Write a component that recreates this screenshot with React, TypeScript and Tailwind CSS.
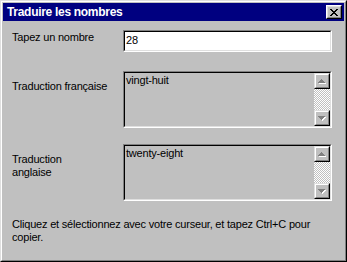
import React from 'react';

const CloseButton: React.FC = () => (
  <div className="w-[16px] h-[14px] border border-t-white border-l-white border-r-black border-b-black">
    <div className="w-full h-full bg-[#c0c0c0] border border-t-[#dfdfdf] border-l-[#dfdfdf] border-r-[#808080] border-b-[#808080] flex items-center justify-center">
      <svg width="8" height="7" viewBox="0 0 8 7" shapeRendering="crispEdges">
        <rect x="0" y="0" width="2" height="1" fill="#000" />
        <rect x="6" y="0" width="2" height="1" fill="#000" />
        <rect x="1" y="1" width="2" height="1" fill="#000" />
        <rect x="5" y="1" width="2" height="1" fill="#000" />
        <rect x="2" y="2" width="4" height="1" fill="#000" />
        <rect x="3" y="3" width="2" height="1" fill="#000" />
        <rect x="2" y="4" width="4" height="1" fill="#000" />
        <rect x="1" y="5" width="2" height="1" fill="#000" />
        <rect x="5" y="5" width="2" height="1" fill="#000" />
        <rect x="0" y="6" width="2" height="1" fill="#000" />
        <rect x="6" y="6" width="2" height="1" fill="#000" />
      </svg>
    </div>
  </div>
);

// disabled scroll arrow: grey glyph with a white shadow
const Arrow: React.FC<{ down?: boolean }> = ({ down }) => {
  const rows = down
    ? [[0, 0, 7], [1, 1, 5], [2, 2, 3], [3, 3, 1]]
    : [[3, 0, 1], [2, 1, 3], [1, 2, 5], [0, 3, 7]];
  return (
    <svg width="8" height="5" viewBox="0 0 8 5" shapeRendering="crispEdges">
      {rows.map(([x, y, w]) => (
        <rect key={`s${y}`} x={x + 1} y={y + 1} width={w} height="1" fill="#fff" />
      ))}
      {rows.map(([x, y, w]) => (
        <rect key={`g${y}`} x={x} y={y} width={w} height="1" fill="#808080" />
      ))}
    </svg>
  );
};

const ScrollButton: React.FC<{ down?: boolean }> = ({ down }) => (
  <div className="w-[16px] h-[16px] border border-t-[#dfdfdf] border-l-[#dfdfdf] border-r-black border-b-black">
    <div className="w-full h-full bg-[#c0c0c0] border border-t-white border-l-white border-r-[#808080] border-b-[#808080] flex items-center justify-center">
      <Arrow down={down} />
    </div>
  </div>
);

const Sunken: React.FC<{ className: string; children: React.ReactNode }> = ({ className, children }) => (
  <div className={`border border-t-[#808080] border-l-[#808080] border-r-white border-b-white ${className}`}>
    <div className="w-full h-full border border-t-black border-l-black border-r-[#dfdfdf] border-b-[#dfdfdf] flex">
      {children}
    </div>
  </div>
);

const ReadOnlyBox: React.FC<{ text: string }> = ({ text }) => (
  <Sunken className="w-[209px] h-[57px]">
    <div className="flex-1 bg-[#c0c0c0] pl-px pt-px">{text}</div>
    <div className="w-[16px] flex flex-col">
      <ScrollButton />
      <div className="flex-1 bg-[repeating-conic-gradient(#ffffff_0_25%,#c0c0c0_0_50%)] bg-size-[2px_2px]" />
      <ScrollButton down />
    </div>
  </Sunken>
);

export default function App() {
  return (
    <div className="w-[347px] h-[262px] border border-t-[#dfdfdf] border-l-[#dfdfdf] border-r-black border-b-black bg-[#c0c0c0] font-['Liberation_Sans',Arial,sans-serif] text-[11px] leading-[13px] tracking-[-0.2px] text-black">
      <div className="h-full border border-t-white border-l-white border-r-[#808080] border-b-[#808080] p-px flex flex-col">
        <div className="h-[18px] bg-[#000080] flex items-center justify-between pl-[4px] pr-[2px]">
          <span className="text-white font-bold text-[12px] tracking-[-0.3px]">Traduire les nombres</span>
          <CloseButton />
        </div>

        <div className="pl-[9px] flex flex-col">
          <div className="flex mt-[9px]">
            <div className="w-[111px] mt-px">Tapez un nombre</div>
            <Sunken className="w-[209px] h-[22px]">
              <div className="flex-1 bg-white pl-px pt-[2px]">28</div>
            </Sunken>
          </div>

          <div className="flex mt-[19px]">
            <div className="w-[111px] mt-[9px]">Traduction française</div>
            <ReadOnlyBox text="vingt-huit" />
          </div>

          <div className="flex mt-[16px]">
            <div className="w-[111px] mt-[9px]">
              Traduction
              <br />
              anglaise
            </div>
            <ReadOnlyBox text="twenty-eight" />
          </div>

          <p className="mt-[17px]">
            Cliquez et sélectionnez avec votre curseur, et tapez Ctrl+C pour
            <br />
            copier.
          </p>
        </div>
      </div>
    </div>
  );
}
